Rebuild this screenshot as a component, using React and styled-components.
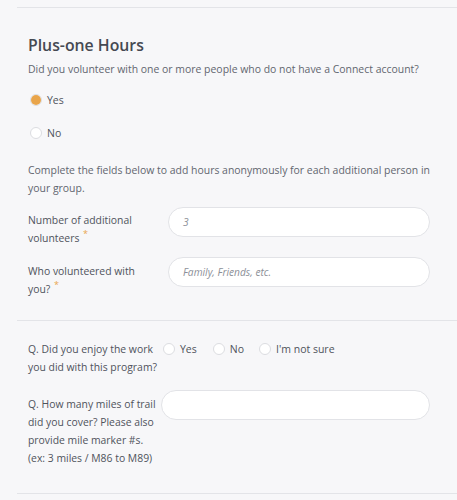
import React from "react";
import styled, { createGlobalStyle } from "styled-components";

const Global = createGlobalStyle`
  html, body { margin: 0; padding: 0; background: #f7f7f9; overflow: hidden; }
  body { font-family: "Open Sans", "Noto Sans", sans-serif; color: #5d626c; }
  * { box-sizing: border-box; }
`;

const Page = styled.div`
  padding: 7px 0 0 17px;
`;

const Section = styled.section`
  border-top: 1px solid #e3e4e8;
  padding: ${(p) => p.$pad || "0 27px 0 11px"};
`;

const Heading = styled.h2`
  margin: 0;
  font-size: 15.8px;
  font-weight: 600;
  color: #454952;
  line-height: 24px;
`;

const Text = styled.p`
  margin: ${(p) => p.$m || "0"};
  margin-right: -10px;
  font-size: 10.45px;
  line-height: 18px;
  color: #62666f;
`;

const RadioList = styled.div`
  display: flex;
  flex-direction: ${(p) => (p.$row ? "row" : "column")};
  gap: ${(p) => p.$gap || "15px"};
  margin: ${(p) => p.$m || "0"};
`;

const RadioItem = styled.label`
  display: flex;
  align-items: center;
  gap: 5px;
  font-size: 10.5px;
  line-height: 18px;
  color: #4f535c;
  padding-left: ${(p) => p.$pl || "0"};
`;

const Circle = styled.span`
  width: 12px;
  height: 12px;
  border-radius: 50%;
  background: #fff;
  border: 1px solid #dcdde1;
  display: flex;
  align-items: center;
  justify-content: center;
  &::after {
    content: "";
    display: ${(p) => (p.$on ? "block" : "none")};
    width: 10px;
    height: 10px;
    border-radius: 50%;
    background: #e9a54b;
  }
`;

const FieldRow = styled.div`
  display: grid;
  grid-template-columns: ${(p) => p.$label || "125px"} 1fr;
  column-gap: ${(p) => p.$gap || "15px"};
  align-items: start;
  margin: ${(p) => p.$m || "0"};
`;

const Label = styled.div`
  font-size: 10.4px;
  line-height: 18px;
  color: #4f535c;
  padding-top: ${(p) => p.$pt || "4px"};
`;

const Req = styled.sup`
  color: #e9a54b;
  font-size: 9px;
  margin-left: 1px;
  vertical-align: 5px;
  line-height: 0;
`;

const Input = styled.div`
  height: 30px;
  border-radius: 15px;
  background: #fff;
  border: 1px solid #e2e3e7;
  display: flex;
  align-items: center;
  padding-left: 14px;
  font-size: 10.2px;
  font-style: italic;
  color: #8c9098;
`;

function Radio({ on, children, pl }) {
  return (
    <RadioItem $pl={pl}>
      <Circle $on={on} />
      {children}
    </RadioItem>
  );
}

export default function App() {
  return (
    <Page>
      <Global />
      <Section $pad="25px 27px 22px 11px">
        <Heading>Plus-one Hours</Heading>
        <Text $m="3px 0 0">Did you volunteer with one or more people who do not have a Connect account?</Text>
        <RadioList $m="13px 0 0" $gap="15px">
          <Radio on pl="2px">Yes</Radio>
          <Radio pl="2px">No</Radio>
        </RadioList>
        <Text $m="19px 0 0">Complete the fields below to add hours anonymously for each additional person in your group.</Text>
        <FieldRow $m="10px 0 0">
          <Label $pt="4px">
            Number of additional volunteers <Req>*</Req>
          </Label>
          <Input>3</Input>
        </FieldRow>
        <FieldRow $m="10px 0 0">
          <Label $pt="5px">
            Who volunteered with you? <Req>*</Req>
          </Label>
          <Input>Family, Friends, etc.</Input>
        </FieldRow>
      </Section>
      <Section $pad="19px 27px 26px 11px">
        <FieldRow $label="130px" $gap="3px">
          <Label $pt="0">Q. Did you enjoy the work you did with this program?</Label>
          <RadioList $row $gap="0">
            <Radio pl="2px">Yes</Radio>
            <Radio pl="16px">No</Radio>
            <Radio pl="15px">I'm not sure</Radio>
          </RadioList>
        </FieldRow>
        <FieldRow $label="130px" $gap="3px" $m="14px 0 0">
          <Label $pt="5px">Q. How many miles of trail did you cover? Please also provide mile marker #s. (ex: 3 miles / M86 to M89)</Label>
          <Input />
        </FieldRow>
      </Section>
      <Section />
    </Page>
  );
}
